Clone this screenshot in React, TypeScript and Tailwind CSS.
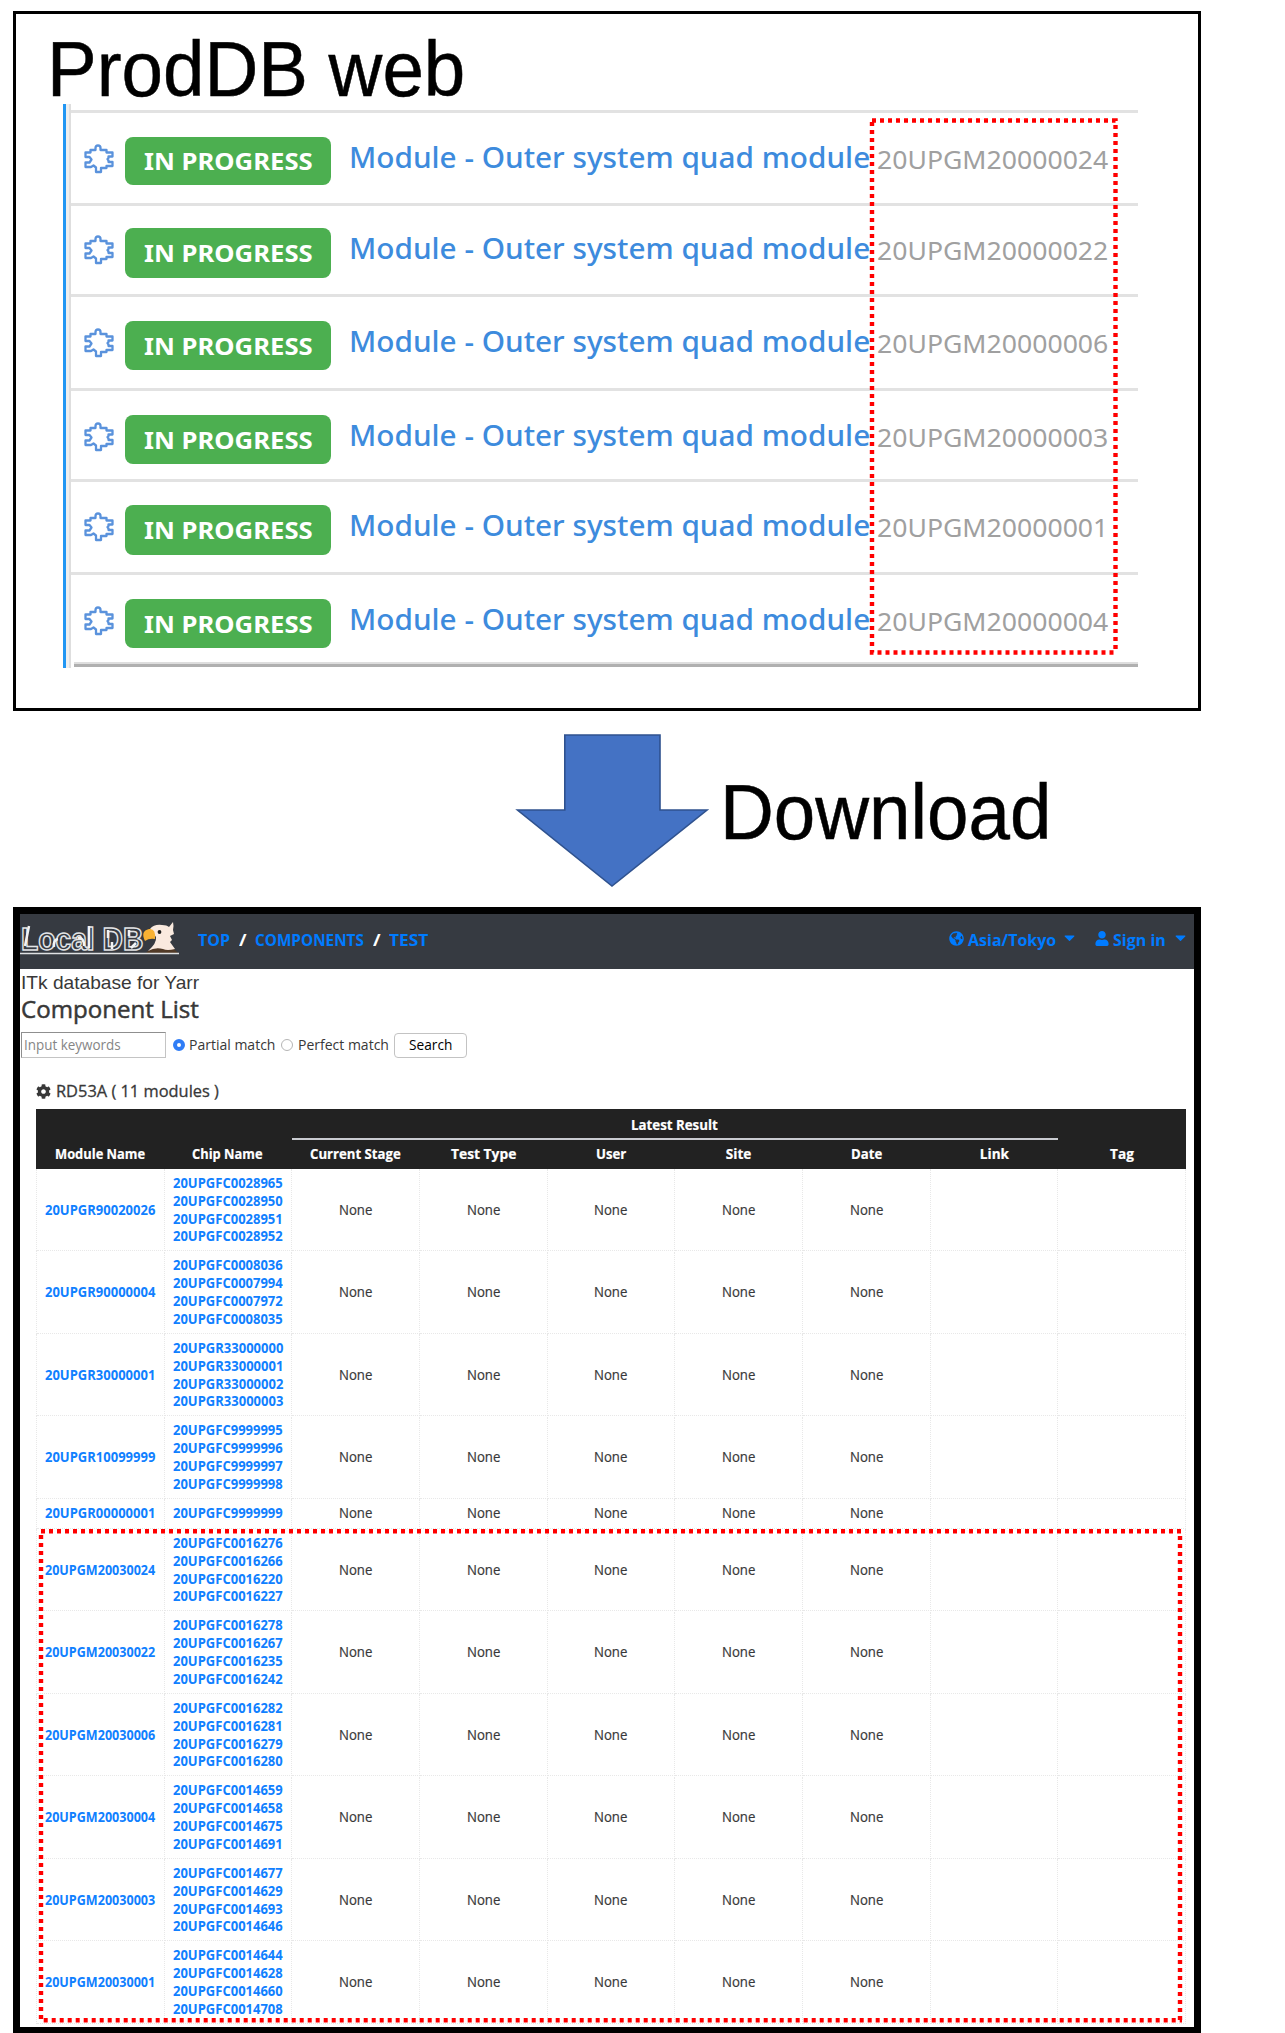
import { useLayoutEffect, useRef, useState } from "react";
import type { ReactNode } from "react";
import { FaCog, FaUser, FaGlobeAmericas, FaCaretDown } from "react-icons/fa";

/* Text condensed or widened horizontally so it fills its box exactly. */
function Fit({ className, children }: { className: string; children: ReactNode }) {
  const box = useRef<HTMLSpanElement>(null);
  const inner = useRef<HTMLSpanElement>(null);
  const [scale, setScale] = useState(1);
  useLayoutEffect(() => {
    const measure = () => {
      if (box.current && inner.current && inner.current.offsetWidth) {
        setScale(box.current.clientWidth / inner.current.offsetWidth);
      }
    };
    measure();
    document.fonts?.ready.then(measure);
  }, []);
  return (
    <span ref={box} className={"block shrink-0 text-left " + className}>
      <span
        ref={inner}
        className="inline-block origin-left whitespace-nowrap"
        style={{ transform: `scaleX(${scale})` }}
      >
        {children}
      </span>
    </span>
  );
}

const items = [
  { serial: "20UPGM20000024", row: "h-[93px] pt-[23px]", badge: "h-[48px]" },
  { serial: "20UPGM20000022", row: "h-[91px] pt-[21px]", badge: "h-[50px]" },
  { serial: "20UPGM20000006", row: "h-[94px] pt-[23px]", badge: "h-[49px]" },
  { serial: "20UPGM20000003", row: "h-[91px] pt-[23px]", badge: "h-[49px]" },
  { serial: "20UPGM20000001", row: "h-[93px] pt-[22px]", badge: "h-[50px]" },
  { serial: "20UPGM20000004", row: "h-[90px] pt-[23px]", badge: "h-[49px]" },
];

const modules: { name: string; chips: string[] }[] = [
  { name: "20UPGR90020026", chips: ["20UPGFC0028965", "20UPGFC0028950", "20UPGFC0028951", "20UPGFC0028952"] },
  { name: "20UPGR90000004", chips: ["20UPGFC0008036", "20UPGFC0007994", "20UPGFC0007972", "20UPGFC0008035"] },
  { name: "20UPGR30000001", chips: ["20UPGR33000000", "20UPGR33000001", "20UPGR33000002", "20UPGR33000003"] },
  { name: "20UPGR10099999", chips: ["20UPGFC9999995", "20UPGFC9999996", "20UPGFC9999997", "20UPGFC9999998"] },
  { name: "20UPGR00000001", chips: ["20UPGFC9999999"] },
  { name: "20UPGM20030024", chips: ["20UPGFC0016276", "20UPGFC0016266", "20UPGFC0016220", "20UPGFC0016227"] },
  { name: "20UPGM20030022", chips: ["20UPGFC0016278", "20UPGFC0016267", "20UPGFC0016235", "20UPGFC0016242"] },
  { name: "20UPGM20030006", chips: ["20UPGFC0016282", "20UPGFC0016281", "20UPGFC0016279", "20UPGFC0016280"] },
  { name: "20UPGM20030004", chips: ["20UPGFC0014659", "20UPGFC0014658", "20UPGFC0014675", "20UPGFC0014691"] },
  { name: "20UPGM20030003", chips: ["20UPGFC0014677", "20UPGFC0014629", "20UPGFC0014693", "20UPGFC0014646"] },
  { name: "20UPGM20030001", chips: ["20UPGFC0014644", "20UPGFC0014628", "20UPGFC0014660", "20UPGFC0014708"] },
];

const headers = [
  { label: "Module Name", w: "w-[90px]" },
  { label: "Chip Name", w: "w-[71px]" },
  { label: "Current Stage", w: "w-[91px]" },
  { label: "Test Type", w: "w-[65px]" },
  { label: "User", w: "w-[30px]" },
  { label: "Site", w: "w-[26px]" },
  { label: "Date", w: "w-[31px]" },
  { label: "Link", w: "w-[29px]" },
  { label: "Tag", w: "w-[24px]" },
];

function ModuleIcon() {
  return (
    <svg className="mt-[8px] h-[30px] w-[30px] shrink-0" viewBox="0 0 30 30" fill="none" stroke="#5a92dc" strokeWidth="2.3" strokeLinejoin="round">
      <path d="M11.500 6V4Q11.500 1.500 14 1.500T16.500 4V6H22.500V8.500H28.500V12.500H24.500V14L23.500 15L24.500 16.500V18H28.500V22H22.500V24H17V28H12V23.500L9.500 21.500L7 23H1.500V18.500H5.500L7.500 15.500L5.500 13H1.500V8.500H6.500V6Z" />
    </svg>
  );
}

function ProdDbPanel() {
  return (
    <section className="relative ml-[13px] h-[700px] w-[1188px] border-[3px] border-black bg-white">
      <h1 className="ml-[31px] mt-[11px] h-[78px] font-['Liberation_Sans'] text-[77px] leading-[88px] text-black [-webkit-text-stroke:0.5px_black]">
        <Fit className="h-[78px] w-[418px]">ProdDB web</Fit>
      </h1>
      <div className="ml-[47px] mt-px flex h-[564px] w-[1075px] border-l-[3px] border-[#2196f3]">
        <div className="w-[5px] shrink-0 border-r-2 border-[#dedede] bg-[#efefef]" />
        <ul className="mt-[6px] h-[558px] flex-1">
          {items.map((it) => (
            <li key={it.serial} className={"flex border-t-[3px] border-[#e2e2e2] pl-[13px] " + it.row}>
              <ModuleIcon />
              <div className={"ml-[11px] mt-px flex w-[206px] shrink-0 items-center justify-center rounded-[8px] bg-[#4caf50] font-['Noto_Sans'] text-[24px] font-bold text-white " + it.badge}>
                <Fit className="w-[169px] leading-[48px]">IN PROGRESS</Fit>
              </div>
              <div className="ml-[18px] font-['Noto_Sans'] text-[29px] font-medium leading-[41px] text-[#3d8bdd]">
                <Fit className="w-[521px]">Module - Outer system quad module</Fit>
              </div>
              <div className="ml-[7px] font-['Noto_Sans'] text-[25px] leading-[46px] text-[#a0a0a0]">
                <Fit className="w-[231px]">{it.serial}</Fit>
              </div>
            </li>
          ))}
          <li className="ml-[3px] h-[5px] border-b-[3px] border-t-2 border-b-[#b0b0b0] border-t-[#dedede]" />
        </ul>
      </div>
      <svg className="absolute left-[852px] top-[100px] h-[545px] w-[252px]" viewBox="868 114 252 545" fill="none" stroke="#ff0000" strokeWidth="4.400" strokeDasharray="4 4">
        <path d="M872 120.500H1115.500V652.500" />
        <path d="M872 122V652.500H1115.500" />
      </svg>
    </section>
  );
}

function Logo() {
  return (
    <div className="relative mt-[8px] h-[34px] w-[160px] shrink-0">
      <div className="h-[34px] w-[126px] font-['Liberation_Sans'] text-[31px] font-bold leading-[35px] text-[#363a41] [-webkit-text-stroke:1.5px_#e2e4e6]">
        <Fit className="ml-px w-[122px]">Local DB</Fit>
      </div>
      <svg className="absolute inset-0 h-[34px] w-[160px]" viewBox="0 0 160 34">
        <path d="M9 4 5 24M38 17q-5 1-4 8M58 16q6-1 6 8M69 4v22M88 8v8M92 20v7M109 8v6M116 21l-5 5" stroke="#f2f3f4" strokeWidth="2.500" fill="none" />
        <path d="M126 31q4-5 12-5 8 1 14-1l6 6z" fill="#513a27" />
        <path d="M130 7q4-5 12-4 5 0 7 2l4-5q1 4 0 8l1 4-4 2 2 4-2 2 5 7q-8 2-12 0-8-2-15 2 9-8 8-14z" fill="#faeadf" />
        <path d="M135 17q-6-1-10 2-5-10 4-12 7-1 6 10z" fill="#f9b233" />
        <circle cx="139.500" cy="10" r="1.900" fill="#1b1b1b" />
        <path d="M0 31.500H159" stroke="#dfe1e3" strokeWidth="1.500" />
      </svg>
    </div>
  );
}

function Caret({ className }: { className: string }) {
  return <FaCaretDown className={"mt-[15px] h-[17px] w-[11px] shrink-0 " + className} />;
}

function Navbar() {
  return (
    <nav className="flex h-[55px] bg-[#363a41] font-['Open_Sans'] text-[16px] font-bold leading-[52px] text-[#007bff]">
      <Logo />
      <Fit className="ml-[18px] w-[32px]">TOP</Fit>
      <Fit className="ml-[9px] w-[8px] text-white">/</Fit>
      <Fit className="ml-[8px] w-[109px]">COMPONENTS</Fit>
      <Fit className="ml-[9px] w-[8px] text-white">/</Fit>
      <Fit className="ml-[8px] w-[39px]">TEST</Fit>
      <FaGlobeAmericas className="ml-[521px] mt-[17px] h-[15px] w-[15px]" />
      <Fit className="ml-[4px] w-[88px]">Asia/Tokyo</Fit>
      <Caret className="ml-[8px]" />
      <FaUser className="ml-[20px] mt-[17px] h-[15px] w-[14px]" />
      <Fit className="ml-[4px] w-[53px]">Sign in</Fit>
      <Caret className="ml-[9px]" />
    </nav>
  );
}

function SearchBar() {
  return (
    <div className="mt-[9px] flex h-[26px] items-center text-[14px] leading-[20px]">
      <div className="flex h-[26px] w-[145px] items-center border border-[#c4c4c4] border-t-[#8f8f8f] border-l-[#8f8f8f] pl-[2px] text-[#858585]">
        <Fit className="w-[97px]">Input keywords</Fit>
      </div>
      <span className="ml-[7px] h-[12px] w-[12px] rounded-full border-4 border-[#2f7df6] bg-white" />
      <Fit className="ml-[4px] w-[86px]">Partial match</Fit>
      <span className="ml-[6px] h-[12px] w-[12px] rounded-full border border-[#b5b5b5] bg-white" />
      <Fit className="ml-[5px] w-[91px]">Perfect match</Fit>
      <button className="ml-[5px] flex h-[25px] w-[73px] items-center justify-center rounded-[4px] border border-[#c3c3c3] bg-white text-black">
        <Fit className="w-[43px]">Search</Fit>
      </button>
    </div>
  );
}

function Cell({ children }: { children?: ReactNode }) {
  return (
    <div className="flex flex-col items-center justify-center border-b border-r border-dotted border-[#e8e8e8]">
      {children}
    </div>
  );
}

function ModuleTable() {
  return (
    <div className="ml-[15px] mt-[8px] w-[1150px] text-[13.600px] [-webkit-text-stroke:0.2px]">
      <div className="h-[59.500px] bg-[#222222] font-bold text-white">
        <div className="grid h-[30px] grid-cols-9">
          <div className="col-span-6 col-start-3 flex h-[31px] justify-center border-b-2 border-[#c9cbd0]">
            <Fit className="w-[87px] leading-[32px]">Latest Result</Fit>
          </div>
        </div>
        <div className="grid h-[29px] grid-cols-9 leading-[30px]">
          {headers.map((h) => (
            <div key={h.label} className="flex justify-center">
              <Fit className={h.w}>{h.label}</Fit>
            </div>
          ))}
        </div>
      </div>
      {modules.map((m) => (
        <div
          key={m.name}
          className={
            "grid grid-cols-9 border-l border-dotted border-[#e8e8e8] pt-[0.500px] leading-[17.900px] " +
            (m.chips.length > 1 ? "h-[82.500px]" : "h-[30px]")
          }
        >
          <Cell>
            <Fit className="w-[110px] font-bold text-[#1080ff] [-webkit-text-stroke:0]">{m.name}</Fit>
          </Cell>
          <Cell>
            {m.chips.map((c) => (
              <Fit key={c} className="w-[110px] font-bold text-[#1080ff] [-webkit-text-stroke:0]">{c}</Fit>
            ))}
          </Cell>
          {[0, 1, 2, 3, 4].map((i) => (
            <Cell key={i}>
              <Fit className="w-[33px]">None</Fit>
            </Cell>
          ))}
          <Cell />
          <Cell />
        </div>
      ))}
    </div>
  );
}

function LocalDbPanel() {
  return (
    <section className="relative ml-[13px] h-[1126px] w-[1188px] border-[7px] border-b-[6px] border-black bg-white font-['Open_Sans'] text-[#383838]">
      <Navbar />
      <div className="pl-px">
        <p className="mt-[3px] h-[22px] font-['Liberation_Sans'] text-[18.500px] leading-[22px]">
          <Fit className="w-[178px]">ITk database for Yarr</Fit>
        </p>
        <h2 className="h-[29px] text-[24.500px] leading-[29px] [-webkit-text-stroke:0.5px]">
          <Fit className="w-[178px]">Component List</Fit>
        </h2>
        <SearchBar />
        <div className="ml-[15px] mt-[23px] flex h-[20px] items-center text-[17px] leading-[20px] [-webkit-text-stroke:0.3px]">
          <FaCog className="h-[15px] w-[15px]" />
          <Fit className="ml-[5px] w-[163px]">RD53A ( 11 modules )</Fit>
        </div>
        <ModuleTable />
      </div>
      <svg className="absolute left-[16px] top-[611px] h-[505px] w-[1152px]" viewBox="36 1525 1152 505" fill="none" stroke="#ff0000" strokeWidth="4.400" strokeDasharray="4 4">
        <path d="M41 1531.300H1182" />
        <path d="M41 1535V2020.300" />
        <path d="M1180 1536V2022" />
        <path d="M43.700 2020.300H1182" />
      </svg>
    </section>
  );
}

export default function App() {
  return (
    <main className="flex h-[2033px] w-[1285px] flex-col overflow-hidden bg-white pt-[11px]">
      <ProdDbPanel />
      <div className="flex h-[196px]">
        <svg className="ml-[514px] mt-[21px] h-[158px] w-[197px] shrink-0" viewBox="514 732 197 158">
          <path d="M564.800 735H660V810H707L612 886L517.500 810H564.800Z" fill="#4472c4" stroke="#2f528f" strokeWidth="1.600" />
        </svg>
        <div className="ml-[9px] mt-[57px] font-['Liberation_Sans'] text-[77px] leading-[88px] text-black [-webkit-text-stroke:0.5px_black]">
          <Fit className="w-[331px]">Download</Fit>
        </div>
      </div>
      <LocalDbPanel />
    </main>
  );
}
